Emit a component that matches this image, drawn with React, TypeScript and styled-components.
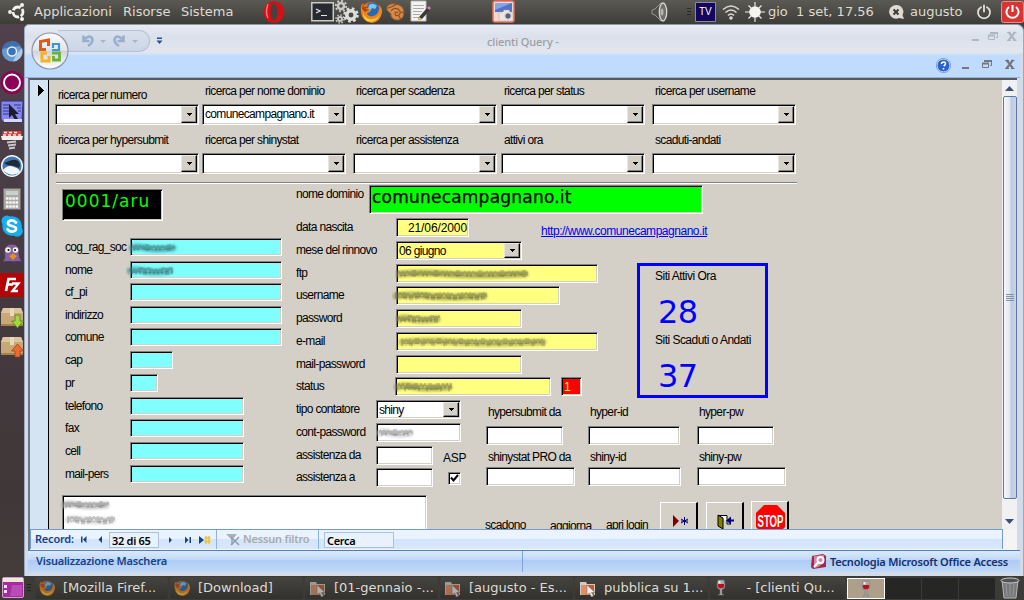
import React from "react";
import styled, { createGlobalStyle, css } from "styled-components";

const Global = createGlobalStyle`
  * { box-sizing: border-box; }
  body { margin: 0; background: #463b43; }
`;

const face = "#d4d0c8";
const formFont = `"Liberation Sans", sans-serif`;

/* ---------- desktop ---------- */
const Desktop = styled.div`
  width: 1024px;
  height: 600px;
  overflow: hidden;
  display: flex;
  flex-direction: column;
  background: #463b43;
`;
const TopPanel = styled.header`
  height: 24px;
  flex: none;
  display: flex;
  align-items: center;
  background: linear-gradient(#5b5953, #3d3c38);
  color: #dfdbd2;
  font: 13px "DejaVu Sans", sans-serif;
  white-space: pre;
`;
const Slot = styled.div<{ $gap?: number; $w: number }>`
  flex: none;
  margin-left: ${(p) => p.$gap ?? 0}px;
  width: ${(p) => p.$w}px;
  height: 24px;
  display: flex;
  align-items: center;
  line-height: 24px;
  padding-bottom: 1px;
`;
const Middle = styled.div`
  height: 552px;
  flex: none;
  display: flex;
`;
const Launcher = styled.nav`
  width: 24px;
  flex: none;
  background: linear-gradient(#51414c, #453940 50%, #403838 85%, #433c3b);
`;
const LaunchItem = styled.div<{ $gap: number; $h: number }>`
  margin-top: ${(p) => p.$gap}px;
  height: ${(p) => p.$h}px;
  svg { display: block; }
`;

/* ---------- window chrome ---------- */
const Win = styled.main`
  width: 1000px;
  flex: none;
  display: flex;
  flex-direction: column;
  background: #d3dbe8;
  border: 1px solid #9aa9bf;
  border-top-color: #8b98ac;
  border-bottom: 0;
  border-radius: 5px 7px 0 0;
  position: relative;
`;
const TitleBar = styled.div`
  height: 28px;
  flex: none;
  display: flex;
  background: linear-gradient(#e7ebf2, #dbe1eb 40%, #e1e6ef);
  border-radius: 5px 7px 0 0;
`;
const QuickBar = styled.div`
  width: 92px;
  height: 22px;
  margin: 5px 0 0 33px;
  display: flex;
  align-items: center;
  padding-left: 22px;
  background: linear-gradient(#d9e1ec, #cbd6e5);
  border: 1px solid #b3c2d8;
  border-left: 0;
  border-radius: 0 11px 11px 0;
`;
const QuickMore = styled.div`
  margin: 12px 0 0 6px;
  width: 8px;
  height: 10px;
  svg { display: block; }
`;
const WinTitle = styled.div`
  width: 90px;
  margin: 4px 0 0 323px;
  font: 500 11px/26px "Noto Sans", sans-serif;
  letter-spacing: -0.1px;
  color: #9d9da1;
  white-space: pre;
`;
const WinButtons = styled.div<{ $gap: number; $right: number; $drop: number }>`
  margin-left: auto;
  padding-right: ${(p) => p.$right}px;
  padding-top: ${(p) => p.$drop}px;
  display: flex;
  align-items: flex-start;
  gap: ${(p) => p.$gap}px;
  svg { display: block; }
`;
const Ribbon = styled.div`
  height: 25px;
  flex: none;
  display: flex;
  margin-right: 3px;
  background: #bfdbff;
  border-top: 2px solid #d3e2f5;
  border-bottom: 1px solid #8fb2e4;
`;
const HelpSlot = styled.div`
  margin: 3px 0 0 auto;
  width: 26px;
  svg { display: block; }
`;
const OfficeButton = styled.div`
  position: absolute;
  left: 6px;
  top: 7px;
  width: 38px;
  height: 38px;
`;
const Body = styled.div`
  margin: 0 4px 0 3px;
  border-left: 2px solid #6f7786;
  border-top: 2px solid #5a5a58;
  height: 472px;
  flex: none;
  display: flex;
  flex-direction: column;
  width: 989px;
  background: #f4f4f4;
`;
const FormArea = styled.div`
  display: flex;
  height: 449px;
  flex: none;
`;
const RecordSelector = styled.div`
  width: 19px;
  flex: none;
  background: #d5e4f3;
  border-right: 1px solid #000;
  padding: 2px 0 0 8px;
`;
const FormSheet = styled.section`
  width: 953px;
  flex: none;
  height: 449px;
  overflow: hidden;
  background: ${face};
  font: 12px/15px ${formFont};
  letter-spacing: -0.66px;
  color: #000;
  white-space: nowrap;
`;
const ScrollBar = styled.div`
  width: 15px;
  flex: none;
  height: 449px;
  display: flex;
  flex-direction: column;
  background: #f1f1f3;
`;
const ArrowCell = styled.div<{ $h: number; $drop?: number }>`
  height: ${(p) => p.$h}px;
  flex: none;
  padding-top: ${(p) => p.$drop ?? 0}px;
  display: flex;
  align-items: center;
  justify-content: center;
`;
const Thumb = styled.div`
  height: 403px;
  flex: none;
  margin: 0 0 0 1px;
  width: 14px;
  border: 1px solid #5d78a8;
  border-radius: 2px;
  background: linear-gradient(90deg, #f5f8fc, #e3e9f1 45%, #bccbe0 60%, #cad6e7);
  display: flex;
  align-items: center;
  justify-content: center;
`;

/* ---------- form parts ---------- */
const sunken = css`
  border: 1px solid;
  border-color: #808080 #fff #fff #808080;
  box-shadow: inset 1px 1px 0 #000, inset -1px -1px 0 ${face};
`;
const Field = styled.div<{ $w: number; $bg?: string; $h?: number; $gap?: number; $color?: string }>`
  ${sunken}
  flex: none;
  width: ${(p) => p.$w}px;
  height: ${(p) => p.$h ?? 19}px;
  margin-left: ${(p) => p.$gap ?? 0}px;
  background: ${(p) => p.$bg ?? "#fff"};
  color: ${(p) => p.$color ?? "#000"};
  padding: 1px 2px 0 3px;
  line-height: 16px;
  overflow: visible;
  svg { display: block; }
`;
const DateField = styled(Field)`
  text-align: right;
  letter-spacing: -0.1px;
  padding-right: 1px;
`;
const StatusCode = styled(Field)`
  padding-left: 2px;
`;
const ComboBox = styled(Field)`
  display: flex;
  justify-content: space-between;
  padding: 1px 1px 1px 2px;
`;
const ComboButton = styled.span`
  width: 16px;
  flex: none;
  height: 100%;
  background: ${face};
  border: 1px solid;
  border-color: #e8e6e0 #000 #000 #e8e6e0;
  box-shadow: inset -1px -1px 0 #808080;
  display: flex;
  align-items: center;
  justify-content: center;
`;
const Caption = styled.div<{ $w?: number; $gap?: number; $drop?: number }>`
  flex: none;
  width: ${(p) => (p.$w ? p.$w + "px" : "auto")};
  margin-left: ${(p) => p.$gap ?? 0}px;
  margin-top: ${(p) => p.$drop ?? 0}px;
  line-height: 17px;
`;
const StatsCaption = styled(Caption)`
  letter-spacing: -0.52px;
`;
const SearchRow = styled.div<{ $top: number }>`
  display: flex;
  padding: ${(p) => p.$top}px 0 0 6px;
`;
const SearchCell = styled.div<{ $w: number; $h?: number; $below?: number }>`
  width: ${(p) => p.$w}px;
  height: ${(p) => p.$h ?? 42}px;
  margin-bottom: ${(p) => p.$below ?? 0}px;
  display: flex;
  flex-direction: column;
  justify-content: space-between;
`;
const Divider = styled.div`
  margin: 8px 0 0 7px;
  width: 741px;
  height: 2px;
  background: #fff;
  border-top: 1px solid #808080;
`;
const Columns = styled.div`
  display: flex;
`;
const Customer = styled.div`
  width: 247px;
  flex: none;
  padding: 5px 0 0 13px;
`;
const CodeBox = styled.div`
  ${sunken}
  width: 101px;
  height: 32px;
  margin-bottom: 17px;
  padding-left: 2px;
  background: #000;
  color: #0f0;
  font: 17px/23px "DejaVu Sans", sans-serif;
  letter-spacing: 1px;
`;
const Row = styled.div<{ $h: number; $pad?: number }>`
  height: ${(p) => p.$h}px;
  padding-left: ${(p) => p.$pad ?? 0}px;
  display: flex;
  align-items: flex-start;
`;
const Main = styled.div`
  flex: 1;
  padding-top: 1px;
`;
const DomainBox = styled.div`
  ${sunken}
  width: 334px;
  height: 29px;
  padding-left: 2px;
  background: #0f0;
  font: 17px/23px "DejaVu Sans", sans-serif;
  letter-spacing: 0.22px;
  -webkit-text-stroke: 0.25px #000;
`;
const Upper = styled.div`
  display: flex;
  height: 182px;
`;
const Site = styled.div`
  width: 341px;
  flex: none;
`;
const Link = styled.a`
  color: #00f;
  text-decoration: underline;
  letter-spacing: -0.47px;
  margin: 6px 0 0 72px;
`;
const Stats = styled.div`
  width: 131px;
  height: 135px;
  margin-top: 45px;
  border: 3px solid #00f;
  padding: 2px 0 0 15px;
`;
const Total = styled.div`
  color: #00f;
  font: 32px/40px "DejaVu Sans", sans-serif;
  height: 47px;
  padding: 7px 0 0 3px;
`;
const Lower = styled.div`
  display: flex;
  height: 95px;
`;
const Counters = styled.div`
  width: 190px;
  flex: none;
`;
const AspBlock = styled.div`
  margin: 4px 0 0 10px;
  display: flex;
  flex-direction: column;
  letter-spacing: -0.3px;
`;
const CheckBox = styled.div`
  ${sunken}
  width: 13px;
  height: 13px;
  margin: 5px 0 0 5px;
  background: #fff;
`;
const Hyper = styled.div`
  padding-top: 4px;
`;
const Footer = styled.div`
  display: flex;
  padding-left: 13px;
  height: 40px;
`;
const ToolButton = styled.div<{ $gap: number; $drop: number }>`
  flex: none;
  width: 38px;
  height: 38px;
  margin: ${(p) => p.$drop}px 0 0 ${(p) => p.$gap}px;
  border: 1px solid;
  border-color: #fff #000 #000 #fff;
  border-right-width: 2px;
  background: ${face};
  padding: 3px 0 0 3px;
  svg { display: block; }
`;

/* ---------- navigation and status bars ---------- */
const NavBar = styled.div`
  width: 973px;
  height: 20px;
  flex: none;
  display: flex;
  align-items: center;
  background: linear-gradient(#eaf3ff 45%, #d3e5fc 50%, #d8e8fd);
  border: 1px solid #6f9bd8;
  border-bottom: 0;
  font: 600 11px/18px "Noto Sans", sans-serif;
  letter-spacing: -0.2px;
  color: #15428b;
  white-space: pre;
`;
const NavBox = styled.div<{ $w: number; $gap: number }>`
  width: ${(p) => p.$w}px;
  height: 16px;
  margin-left: ${(p) => p.$gap}px;
  padding-left: 2px;
  line-height: 15px;
  border: 1px solid #a9c1e2;
  background: #e8f1fc;
  color: #000;
  letter-spacing: -0.3px;
`;
const NavText = styled.div<{ $w: number; $gap: number; $muted?: boolean }>`
  width: ${(p) => p.$w}px;
  margin-left: ${(p) => p.$gap}px;
  margin-top: -1px;
  color: ${(p) => (p.$muted ? "#a9aaab" : "inherit")};
`;
const NavIcon = styled.div<{ $w: number; $gap: number }>`
  width: ${(p) => p.$w}px;
  margin-left: ${(p) => p.$gap}px;
  svg { display: block; }
`;
const NavSep = styled.div<{ $gap: number }>`
  width: 1px;
  height: 100%;
  background: #8db2e3;
  margin-left: ${(p) => p.$gap}px;
`;
const StatusBar = styled.div`
  height: 22px;
  flex: none;
  margin: 0 3px;
  display: flex;
  align-items: center;
  background: linear-gradient(#d9e9fd, #c3daf8 40%, #adcbf3 42%, #c1d9f8);
  border-top: 1px solid #567db0;
  font: 600 11px/20px "Noto Sans", sans-serif;
  letter-spacing: -0.2px;
  color: #15428b;
  padding-left: 8px;
  white-space: pre;
`;
const StatusLeft = styled.div`
  width: 487px;
  height: 21px;
  border-right: 1px solid #7ea3d6;
`;
const StatusRight = styled.div`
  margin-left: 288px;
  display: flex;
  align-items: center;
  gap: 4px;
  color: #12316f;
`;

/* ---------- task bar ---------- */
const TaskBar = styled.footer`
  height: 24px;
  flex: none;
  display: flex;
  align-items: center;
  background: #3c3b37;
  color: #dfdbd2;
  font: 13px/22px "DejaVu Sans", sans-serif;
  white-space: pre;
`;
const Task = styled.div<{ $w?: number; $dim?: boolean }>`
  width: ${(p) => p.$w ?? 133}px;
  height: 22px;
  margin-right: 2px;
  flex: none;
  display: flex;
  align-items: center;
  gap: 8px;
  padding-left: 4px;
  border-radius: 3px;
  background: linear-gradient(#45443f, #32312e);
  svg { opacity: ${(p) => (p.$dim ? 0.65 : 1)}; flex: none; }
`;
const Workspace = styled.div<{ $active?: boolean }>`
  width: ${(p) => (p.$active ? 38 : 37)}px;
  height: 21px;
  flex: none;
  background: ${(p) => (p.$active ? "#ad9f8a" : "#262624")};
  border: ${(p) => (p.$active ? "1px solid #fff" : "0")};
  border-right: ${(p) => (p.$active ? "1px solid #fff" : "1px solid #3c3b37")};
  display: flex;
  align-items: center;
  justify-content: center;
`;

/* ---------- drawings ---------- */
const DownArrow = () => (
  <svg width="5" height="3" shapeRendering="crispEdges"><path d="M0 0h5v1H4v1H3v1H2V2H1V1H0z" /></svg>
);
const Firefox = ({ s = 22 }: { s?: number }) => (
  <svg width={s} height={s} viewBox="0 0 22 22">
    <circle cx="11" cy="11" r="10" fill="#e8721c" />
    <circle cx="12" cy="9" r="7.4" fill="#2a68b0" />
    <path d="M9 4q4-3 8 1l-2 3-3-1-1 2-3-1z" fill="#7cc5ee" />
    <path d="M1 10Q0 4 3 2l1 3 4-1-1 3 4 2-1 2-3 1q1 4 6 3 5-1 6-7 1-3-1-5 5 4 4 9-2 9-10 10Q2 20 1 10z" fill="#ee8420" />
    <path d="M3 12q3 7 10 6 6-1 7-7-1 9-9 10-8 0-8-9z" fill="#ffc532" />
    <path d="M2 8q0-3 1-5l1 3 4-1-2 3 3 1-4 2z" fill="#b94214" />
  </svg>
);
const Folder = () => (
  <svg width="17" height="17" viewBox="0 0 17 17">
    <path d="M1 2h6l1 2h8v11H1z" fill="#cfcac3" />
    <path d="M2 5h13v10H2z" fill="#c7572c" />
    <path d="M2 5h7l3 10H2z" fill="#e58c62" />
    <path d="M8 5v10l2.500-2 2 4 2-1-2-3.500h3.500z" fill="#f1efec" stroke="#777" strokeWidth=".6" />
  </svg>
);
const Wine = () => (
  <svg width="10" height="17" viewBox="0 0 10 17">
    <path d="M2 1h6l1 5q0 4-3 4.500V15l2 1H2l2-1v-4.500Q1 10 1 6z" fill="#a8a8a8" stroke="#777" strokeWidth=".5" />
    <path d="M2 5h6q1 4-3 4.500Q1 9 2 5z" fill="#b8101c" />
    <path d="M2.500 2h2v2.500h-2z" fill="#eee" />
  </svg>
);
const SmudgeArt = styled.svg<{ $dx: number }>`
  margin-left: ${(p) => p.$dx - 8}px;
  .body { filter: blur(1px); }
  .hatch { filter: blur(0.4px); }
`;
const Smudge = ({ w, tone, seed = 1, dx = 0 }: { w: number; tone: string; seed?: number; dx?: number }) => {
  let hatch = "";
  for (let i = 0; i < Math.floor(w / 2); i++) {
    const k = (i * 7 + seed * 5 + i * i) % 11;
    hatch += `M${4 + i * 2} ${4 + (k % 4) * 0.8}v${3 + (k % 5)}`;
  }
  return (
    <SmudgeArt $dx={dx} width={w + 12} height="15">
      <path className="body" d={`M4 8Q${w * 0.2} 6 ${w * 0.4} 8T${w} 8`} stroke={tone} strokeWidth="7" opacity=".6" fill="none" strokeLinecap="round" />
      <path className="hatch" d={hatch} stroke="#222" strokeWidth="1" opacity=".38" fill="none" />
      <path className="hatch" d={`M6 9.500Q${w * 0.3} 8 ${w * 0.5} 9.500T${w - 2} 8.500`} stroke="#222" strokeWidth="1" opacity=".18" fill="none" />
    </SmudgeArt>
  );
};
const Power = ({ c }: { c: string }) => (
  <svg width="16" height="16" viewBox="0 0 16 16" fill="none" stroke={c} strokeWidth="1.900" strokeLinecap="round">
    <path d="M5 3.200a6 6 0 1 0 6 0M8 1.500v6" />
  </svg>
);
const WinIcons = ({ c }: { c: string }) => (
  <>
    <svg width="7" height="11"><path d="M0 8h7v2H0z" fill={c} /></svg>
    <svg width="10" height="11"><path d="M2.500 1.500h7v5H8M.5 4.500h6v4h-6z" fill="none" stroke={c} /><path d="M2 1h8v2H2zM0 3.500h7v2H0z" fill={c} /></svg>
    <svg width="10" height="11"><path d="M1.500 1l6.500 8.500M8 1L1.500 9.500" stroke={c} strokeWidth="2.100" /><path d="M0 1.500h4M6 1.500h3.500M0 9.500h4M6 9.500h3.500" stroke={c} /></svg>
  </>
);

const Combo = ({ w, text, h = 21, bg, gap }: { w: number; text?: string; h?: number; bg?: string; gap?: number }) => (
  <ComboBox $w={w} $h={h} $bg={bg} $gap={gap}>
    <span>{text}</span>
    <ComboButton><DownArrow /></ComboButton>
  </ComboBox>
);

const searchTop = [
  ["ricerca per numero", 147, ""],
  ["ricerca per nome dominio", 151, "comunecampagnano.it"],
  ["ricerca per scadenza", 148, ""],
  ["ricerca per status", 151, ""],
  ["ricerca per username", 144, ""],
] as const;
const searchBottom = [
  ["ricerca per hypersubmit", 147],
  ["ricerca per shinystat", 151],
  ["ricerca per assistenza", 148],
  ["attivi ora", 151],
  ["scaduti-andati", 144],
] as const;
const customerRows: [string, number, number, number][] = [
  ["cog_rag_soc", 152, 23, 1],
  ["nome", 152, 22, 2],
  ["cf_pi", 152, 23, 0],
  ["indirizzo", 152, 22, 0],
  ["comune", 152, 23, 0],
  ["cap", 43, 23, 0],
  ["pr", 28, 23, 0],
  ["telefono", 114, 22, 0],
  ["fax", 114, 23, 0],
  ["cell", 114, 23, 0],
  ["mail-pers", 114, 23, 0],
];
const yellow = "#ffff80";

const LaunchIcons = () => (
  <Launcher>
    <LaunchItem $gap={17} $h={21}>
      <svg width="24" height="21"><circle cx="12" cy="10.500" r="10" fill="#6a9bd0" /><path d="M2 8a10.500 10.500 0 0 1 19-3l-9 1z" fill="#3f6fae" /><path d="M22 7a10 10 0 0 1-9 13.500l4-8z" fill="#a9cbea" /><circle cx="12" cy="10.500" r="4.500" fill="#3a73b9" stroke="#e4eef8" strokeWidth="1.500" /></svg>
    </LaunchItem>
    <LaunchItem $gap={9} $h={23}>
      <svg width="24" height="23"><circle cx="12" cy="11.500" r="11.500" fill="#8c0057" /><circle cx="12" cy="11.500" r="8" fill="none" stroke="#fff" strokeWidth="2" /></svg>
    </LaunchItem>
    <LaunchItem $gap={6} $h={23}>
      <svg width="24" height="23"><path d="M1 1h22v2l-1 16 1 3H3l-2-3z" fill="#8588f0" stroke="#33336e" /><path d="M3 5h7M3 8h7M3 11h7M3 14h9M14 5h7M17 8h4M18 11h3" stroke="#34347c" /><path d="M9 4v14l3-3 3 5 3-1-3-5h4z" fill="#1c1c28" /><path d="M4 19h18v3H4z" fill="#d8d8f8" /></svg>
    </LaunchItem>
    <LaunchItem $gap={7} $h={20}>
      <svg width="24" height="20"><path d="M3 1h18l1 6H2z" fill="#d9453a" /><path d="M1 6h22l-1 4H2z" fill="#f3efee" /><path d="M4 2.500h3M9 2.500h3M14 2.500h3M3 5h3M8 5h3M13 5h3M18 5h3" stroke="#f6e9e6" strokeWidth="1.500" /><path d="M7 12.500l9-1M8 15.500l8-1M9 18.500l6-1" stroke="#c9c9c9" strokeWidth="2.200" /></svg>
    </LaunchItem>
    <LaunchItem $gap={5} $h={22}>
      <svg width="24" height="22"><circle cx="12" cy="11" r="10.300" fill="#3d79b6" stroke="#eef3f7" strokeWidth="1.500" /><path d="M3 15q5-6 11-3 5 1 6 5-8 6-16-1z" fill="#f4f6f8" /><path d="M4 8l8-3q7-1 8 5l-1 3-5-2-7-1z" fill="#222a33" /></svg>
    </LaunchItem>
    <LaunchItem $gap={11} $h={23}>
      <svg width="24" height="23"><path d="M3.500.500h17v21h-17z" fill="#a8a8a4" stroke="#6d6d69" /><path d="M6 3h12v4H6z" fill="#c9d2c9" /><path d="M6 10.500h12M6 14.500h12M6 18.500h12" stroke="#f4f4f2" strokeWidth="2.500" strokeDasharray="2.500 .7" /></svg>
    </LaunchItem>
    <LaunchItem $gap={4} $h={22}>
      <svg width="24" height="22"><circle cx="12" cy="11" r="9.800" fill="#17aef0" /><circle cx="7" cy="6" r="5.500" fill="#17aef0" /><circle cx="17" cy="16" r="5.800" fill="#17aef0" /><path d="M16 7.500Q14 5.200 11.500 5.400 8 5.700 8 8.200q0 2 4 2.800 4.300.8 4 3-.2 2.500-4 2.600-3 0-4.500-2.300" fill="none" stroke="#fff" strokeWidth="2.800" strokeLinecap="round" /></svg>
    </LaunchItem>
    <LaunchItem $gap={5} $h={21}>
      <svg width="24" height="21"><path d="M2 20q4-3 2-11 2-8 9-7 7 1 6 9 0 5 3 9-6-1-8 0-6-1-12 0z" fill="#80649c" stroke="#4b3563" /><circle cx="8" cy="8" r="2.800" fill="#f6f1e6" /><circle cx="15.500" cy="8" r="2.800" fill="#f6f1e6" /><circle cx="8.500" cy="8" r="1" /><circle cx="15" cy="8" r="1" /><path d="M9 14l4-2.500 4 2.500-4 4z" fill="#f08b1d" /></svg>
    </LaunchItem>
    <LaunchItem $gap={10} $h={24}>
      <svg width="24" height="24"><path d="M0 0h24v24H0z" fill="#b30505" /><path d="M6 18L8.500 6H16M7 11.500h6" stroke="#fff" strokeWidth="2.600" fill="none" /><path d="M12 10.500h6.500l-6 7.500H18" stroke="#fff" strokeWidth="2.300" fill="none" /></svg>
    </LaunchItem>
    {["M15 8h5v6h3.500L17.500 21 11.500 14H15z", "M15 21h5v-6h3.500L17.500 8 11.500 15H15z"].map((d, i) => (
      <LaunchItem key={d} $gap={10 - i} $h={20 + i}>
        <svg width="24" height="22" overflow="visible"><path d="M3 1h18l2 5v13H1V6z" fill="#c9a878" /><path d="M3 1h18l2 5H1z" fill="#dcc49c" /><path d="M10 1h4v8h-4z" fill="#ead9b8" /><path d="M1 17h22v2H1z" fill="#a5834f" /><path d={d} fill={i ? "#ee6c2f" : "#a3d63a"} stroke={i ? "#a3401a" : "#54801a"} strokeWidth=".8" /></svg>
      </LaunchItem>
    ))}
  </Launcher>
);

const Panel = () => (
  <TopPanel>
    <Slot $gap={8} $w={18}>
      <svg width="18" height="18" viewBox="0 0 18 18"><circle cx="10" cy="9" r="5" fill="none" stroke="#f4f2ec" strokeWidth="2.800" strokeDasharray="8.800 1.700" strokeDashoffset="4" /><circle cx="2" cy="9" r="1.900" fill="#f4f2ec" /><circle cx="14" cy="2" r="2" fill="#f4f2ec" /><circle cx="14" cy="16" r="2" fill="#f4f2ec" /></svg>
    </Slot>
    <Slot $gap={8} $w={89}>Applicazioni</Slot>
    <Slot $w={58}>Risorse</Slot>
    <Slot $w={60}>Sistema</Slot>
    <Slot $gap={22} $w={22}>
      <svg width="22" height="22"><ellipse cx="11" cy="11" rx="10.500" ry="10.800" fill="#cf1216" /><ellipse cx="11" cy="11" rx="3.300" ry="8.500" fill="#45433f" /><path d="M5 3q-3 8 0 14" stroke="#f4777a" strokeWidth="1.500" fill="none" /></svg>
    </Slot>
    <Slot $gap={26} $w={24}>
      <svg width="24" height="20"><path d="M.8.800h21.500v18H.8z" fill="#272b31" stroke="#c9cac6" strokeWidth="1.500" /><path d="M5 7l4 2-4 2M10 13.500h6" stroke="#e8e8e8" fill="none" strokeWidth="1.200" /></svg>
    </Slot>
    <Slot $w={24}>
      <svg width="24" height="24"><g fill="none" stroke="#c9c9c7"><circle cx="6" cy="6" r="3" strokeWidth="2.500" /><circle cx="6" cy="6" r="5.200" strokeWidth="2" strokeDasharray="2 2" /><circle cx="5" cy="19" r="2" strokeWidth="2" /><circle cx="5" cy="19" r="4" strokeWidth="1.500" strokeDasharray="1.600 1.500" /><circle cx="16" cy="15" r="4.200" strokeWidth="3.500" stroke="#dcdcda" /><circle cx="16" cy="15" r="6.500" strokeWidth="2.500" strokeDasharray="2.600 2.500" stroke="#dcdcda" /></g></svg>
    </Slot>
    <Slot $gap={1} $w={22}><Firefox /></Slot>
    <Slot $gap={4} $w={20}>
      <svg width="20" height="20"><path d="M1 5q2-4 8-3 9 1 9 9-1 8-8 7-6-2-5-6l-4-4z" fill="#d58a4d" stroke="#9c5a24" /><path d="M5 9q3-4 7-2 4 3 1 6-4 2-4-2 2-2 3 0M2 6q4-1 9-4M13 14l2 4M15 10l3 1" fill="none" stroke="#8f4e1c" strokeWidth="1.200" /></svg>
    </Slot>
    <Slot $gap={4} $w={21}>
      <svg width="21" height="23"><path d="M1 1h15v20H1z" fill="#f3f3f1" stroke="#bbb" /><path d="M3 5.500h11M3 8.500h11M3 11.500h9M3 14.500h7M3 17.500h6" stroke="#aaa" /><path d="M9 17l8-9 3 2-8 9-4 1z" fill="#3a3a3a" /><path d="M17 8l2-2 2 2-1.500 2z" fill="#d279b8" /><path d="M8 20l1-3 3 2z" fill="#e6d54a" /></svg>
    </Slot>
    <Slot $gap={61} $w={24}>
      <svg width="23" height="23"><rect x="1" y="1" width="21" height="21" rx="2" fill="#f4d6cf" stroke="#e2705b" strokeWidth="1.500" /><path d="M3 3h17v9H3z" fill="#4f74c8" /><path d="M3 3h17l-17 7z" fill="#84a5e6" /><path d="M7 12h4l1-2h5l1 2h3v9H7z" fill="#f0e2dc" stroke="#b8a39c" strokeWidth=".5" /><circle cx="16" cy="16" r="3.200" fill="#53617c" stroke="#ddd" /></svg>
    </Slot>
    <Slot $gap={135} $w={18}>
      <svg width="18" height="22"><path d="M1 9l3-1 6-6 2 1v16l-2 1-6-6-3-1z" fill="#4f4e4a" stroke="#96948e" /><ellipse cx="12" cy="11" rx="3.700" ry="9" fill="#6f6e6a" stroke="#d8d6d0" strokeWidth="1.300" /><ellipse cx="11" cy="11" rx="1.500" ry="3.500" fill="#b5b3ad" /></svg>
    </Slot>
    <Slot $gap={18} $w={6}><svg width="5" height="10"><path d="M0 1.500h4M0 4.500h4M0 7.500h4" stroke="#2a2926" /></svg></Slot>
    <Slot $gap={2} $w={23}>
      <svg width="21" height="20"><path d="M.5.500h20v19H.5z" fill="#14065c" stroke="#8b8aa0" /><text x="4" y="13" fontSize="10" fontFamily="Liberation Sans" fill="#fff">TV</text></svg>
    </Slot>
    <Slot $gap={4} $w={19}>
      <svg width="18" height="18" fill="none" stroke="#dfdbd2" strokeWidth="1.600"><path d="M1 6.500q8-7 16 0M3.500 9.500q5.500-5 11 0M6 12.500q3-3 6 0" /><circle cx="9" cy="15" r="1" fill="#dfdbd2" /></svg>
    </Slot>
    <Slot $gap={4} $w={20}>
      <svg width="20" height="20"><circle cx="10" cy="10" r="5.800" fill="#f5f4f0" /><path d="M10 0v20M0 10h20M3.500 3.500l13 13M16.500 3.500l-13 13" stroke="#f5f4f0" strokeWidth="1.100" /></svg>
    </Slot>
    <Slot $gap={3} $w={120}>gio  1 set, 17.56</Slot>
    <Slot $w={17}>
      <svg width="17" height="16"><path d="M8 1a7 6.800 0 1 0 3 13l5 1-1.500-4A7 6.800 0 0 0 8 1z" fill="#dfdbd2" /><path d="M5.500 5.500l5 5M10.500 5.500l-5 5" stroke="#3c3b37" strokeWidth="2" /></svg>
    </Slot>
    <Slot $gap={5} $w={66}>augusto</Slot>
    <Slot $w={16}><Power c="#dfdbd2" /></Slot>
    <Slot $gap={9} $w={23}>
      <svg width="23" height="22"><rect x=".5" y=".5" width="22" height="21" rx="2" fill="#d83434" stroke="#f08a84" /><path d="M8 6a6 6 0 1 0 7 0M11.500 4v7" fill="none" stroke="#fff" strokeWidth="2" /></svg>
    </Slot>
  </TopPanel>
);

const hyperGroups: [string, number, number][][] = [
  [["hypersubmit da", 102, 77], ["hyper-id", 109, 92], ["hyper-pw", 90, 77]],
  [["shinystat PRO da", 102, 89], ["shiny-id", 109, 93], ["shiny-pw", 90, 89]],
];

export default function App() {
  return (
    <Desktop>
      <Global />
      <Panel />
      <Middle>
        <LaunchIcons />
        <Win>
          <TitleBar>
            <QuickBar>
              <svg width="62" height="14"><path d="M5 5Q10 0 12.500 5q.5 4-4.500 7M3.500 1.500v5.500h6" fill="none" stroke="#98aece" strokeWidth="2.600" /><path d="M20 6h6l-3 3zM52 6h6l-3 3z" fill="#a9b5c8" /><path d="M42 5Q37 0 34.500 5q-.5 4 4.500 7M43.500 1.500v5.500h-6" fill="none" stroke="#98aece" strokeWidth="2.600" /></svg>
            </QuickBar>
            <QuickMore><svg width="7" height="8"><path d="M1 .5h5v1.500H1zM.5 3.500h6L3.500 7z" fill="#26509a" /></svg></QuickMore>
            <WinTitle>clienti Query -</WinTitle>
            <WinButtons $gap={9} $right={6} $drop={6}><WinIcons c="#afb7c4" /></WinButtons>
          </TitleBar>
          <Ribbon>
            <HelpSlot>
              <svg width="15" height="15"><circle cx="7.500" cy="7.500" r="6.500" fill="#2a62cf" stroke="#eaf2ff" /><circle cx="7.500" cy="7.500" r="7" fill="none" stroke="#4a76b8" strokeWidth=".7" /><path d="M5.500 6q0-2 2-2t2 1.700q0 1-1.800 2.500M7.500 10v1.500" stroke="#fff" strokeWidth="1.500" fill="none" /></svg>
            </HelpSlot>
            <div>
              <WinButtons $gap={13} $right={5} $drop={4}><WinIcons c="#75777a" /></WinButtons>
            </div>
          </Ribbon>
          <OfficeButton>
            <svg width="38" height="38"><defs><linearGradient id="orb" x2="0" y2="1"><stop stopColor="#fdfdfd" /><stop offset=".48" stopColor="#e2e4e8" /><stop offset=".5" stopColor="#cfd3da" /><stop offset="1" stopColor="#fff" /></linearGradient></defs><circle cx="19" cy="19" r="18" fill="url(#orb)" stroke="#8c97a8" strokeWidth="1.200" /><g fill="none" strokeWidth="3"><path d="M15 17.500H9.500V9.500l8-1.500v6" stroke="#df5a18" /><path d="M21 18h7v-6h-6v4" stroke="#3c97d8" strokeWidth="2.200" /><path d="M16 21h-5v8h7v-5" stroke="#f3b51c" /><path d="M21 21h7.500v7h-6v-4" stroke="#6bb13c" strokeWidth="2.800" /></g></svg>
          </OfficeButton>
          <Body>
            <FormArea>
              <RecordSelector><svg width="7" height="11" shapeRendering="crispEdges"><path d="M0 0l6 5.500L0 11z" /></svg></RecordSelector>
              <FormSheet>
                <SearchRow $top={3}>
                  {searchTop.map(([t, w, v], i) => (
                    <SearchCell key={t} $w={w}>
                      <Caption $gap={3} $drop={i ? 0 : 4}>{t}</Caption>
                      <Combo w={144} text={v} />
                    </SearchCell>
                  ))}
                </SearchRow>
                <SearchRow $top={7}>
                  {searchBottom.map(([t, w]) => (
                    <SearchCell key={t} $w={w}>
                      <Caption $gap={3}>{t}</Caption>
                      <Combo w={144} />
                    </SearchCell>
                  ))}
                </SearchRow>
                <Divider />
                <Columns>
                  <Customer>
                    <CodeBox>0001/aru</CodeBox>
                    {customerRows.map(([t, w, h, s]) => (
                      <Row key={t} $h={h} $pad={3}>
                        <Caption $w={65} $drop={1}>{t}</Caption>
                        <Field $w={w} $bg="#80ffff" $h={18}>{s ? <Smudge w={s === 1 ? 45 : 44} tone="#3d9096" seed={s} dx={s === 1 ? 2 : 0} /> : null}</Field>
                      </Row>
                    ))}
                  </Customer>
                  <Main>
                    <Row $h={33}>
                      <Caption $w={73} $drop={1}>nome dominio</Caption>
                      <DomainBox>comunecampagnano.it</DomainBox>
                    </Row>
                    <Upper>
                      <Site>
                        <Row $h={23}><Caption $w={100} $drop={1}>data nascita</Caption><DateField $w={73} $bg={yellow}>21/06/2000</DateField><Link>http://www.comunecampagnano.it</Link></Row>
                        <Row $h={23}><Caption $w={100} $drop={1}>mese del rinnovo</Caption><Combo w={126} h={19} bg={yellow} text="06 giugno" /></Row>
                        <Row $h={22}><Caption $w={100} $drop={1}>ftp</Caption><Field $w={202} $bg={yellow}><Smudge w={130} tone="#8b8b4c" dx={3} /></Field></Row>
                        <Row $h={23}><Caption $w={100} $drop={1}>username</Caption><Field $w={164} $bg={yellow}><Smudge w={92} tone="#8b8b4c" seed={3} /></Field></Row>
                        <Row $h={23}><Caption $w={100} $drop={1}>password</Caption><Field $w={126} $bg={yellow}><Smudge w={42} tone="#8b8b4c" seed={2} dx={3} /></Field></Row>
                        <Row $h={23}><Caption $w={100} $drop={1}>e-mail</Caption><Field $w={202} $bg={yellow}><Smudge w={145} tone="#9c9c58" seed={4} dx={6} /></Field></Row>
                        <Row $h={22}><Caption $w={100} $drop={1}>mail-password</Caption><Field $w={126} $bg={yellow} /></Row>
                        <Row $h={23}><Caption $w={99} $drop={1}>status</Caption><Field $w={156} $bg={yellow}><Smudge w={56} tone="#8b8b4c" seed={5} dx={2} /></Field><StatusCode $w={21} $gap={10} $bg="#f00" $color="#ff0">1</StatusCode></Row>
                      </Site>
                      <Stats>
                        <StatsCaption>Siti Attivi Ora</StatsCaption>
                        <Total>28</Total>
                        <StatsCaption>Siti Scaduti o Andati</StatsCaption>
                        <Total>37</Total>
                      </Stats>
                    </Upper>
                    <Lower>
                      <Counters>
                        <Row $h={23}><Caption $w={80} $drop={1}>tipo contatore</Caption><Combo w={85} h={19} text="shiny" /></Row>
                        <Row $h={23}><Caption $w={80} $drop={1}>cont-password</Caption><Field $w={85}><Smudge w={34} tone="#bbb" dx={4} /></Field></Row>
                        <Columns>
                          <div>
                            <Row $h={22}><Caption $w={80} $drop={1}>assistenza da</Caption><Field $w={57} /></Row>
                            <Row $h={22}><Caption $w={80} $drop={1}>assistenza a</Caption><Field $w={57} /></Row>
                          </div>
                          <AspBlock>
                            <Caption>ASP</Caption>
                            <CheckBox><svg width="11" height="11"><path d="M2 4.500l2.500 3L9 2" fill="none" stroke="#000" strokeWidth="2" /></svg></CheckBox>
                          </AspBlock>
                        </Columns>
                      </Counters>
                      <Hyper>
                        {hyperGroups.map((g, i) => (
                          <Columns key={i}>
                            {g.map(([t, w, fw]) => (
                              <SearchCell key={t} $w={w} $h={i ? 38 : 41} $below={i ? 0 : 3}>
                                <Caption $gap={2} $drop={i}>{t}</Caption>
                                <Field $w={fw} />
                              </SearchCell>
                            ))}
                          </Columns>
                        ))}
                      </Hyper>
                    </Lower>
                  </Main>
                </Columns>
                <Footer>
                  <Field $w={365} $h={50}><Smudge w={46} tone="#aaa" dx={2} /><Smudge w={48} tone="#ccc" seed={3} dx={6} /></Field>
                  <Caption $gap={58} $w={65} $drop={22}>scadono</Caption>
                  <Caption $w={56} $drop={23}>aggiorna</Caption>
                  <Caption $w={43} $drop={22}>apri login</Caption>
                  <ToolButton $gap={11} $drop={7}>
                    <svg width="32" height="32"><path d="M9 9l6 6-6 6z" fill="#800000" /><path d="M20.500 11v8M17 13l7 4M24 13l-7 4M17 15h7" stroke="#000080" /></svg>
                  </ToolButton>
                  <ToolButton $gap={8} $drop={7}>
                    <svg width="32" height="32"><path d="M8 9.500h9V18h4" fill="#fff" stroke="#000" /><path d="M8 9l5 3v11l-5-3z" fill="#808000" stroke="#000" /><path d="M16 14.500l5-4v3h3v2h-3v3z" fill="#000080" /></svg>
                  </ToolButton>
                  <ToolButton $gap={7} $drop={6}>
                    <svg width="31" height="31"><path d="M9 0h13l8 8v14l-8 8H9l-8-8V8z" fill="#f00" /><text x="2.500" y="21.500" textLength="26" lengthAdjust="spacingAndGlyphs" fontSize="17" fontWeight="bold" fontFamily="Liberation Sans" letterSpacing="0" fill="#fff">STOP</text></svg>
                  </ToolButton>
                </Footer>
              </FormSheet>
              <ScrollBar>
                <ArrowCell $h={16}><svg width="9" height="5"><path d="M0 5l4.500-5L9 5z" fill="#3d4f78" /></svg></ArrowCell>
                <Thumb><svg width="8" height="8"><path d="M0 .5h8M0 2.500h8M0 4.500h8M0 6.500h8" stroke="#8391a8" /></svg></Thumb>
                <ArrowCell $h={30} $drop={14}><svg width="9" height="5"><path d="M0 0l4.500 5L9 0z" fill="#3d4f78" /></svg></ArrowCell>
              </ScrollBar>
            </FormArea>
            <NavBar>
              <NavText $gap={4} $w={44}>Record:</NavText>
              <NavIcon $gap={2} $w={28}><svg width="24" height="7"><path d="M0 .5h1.500v6H0zM5.500 0v7L2 3.500zM21 0v7l-3.500-3.500z" fill="#15428b" /></svg></NavIcon>
              <NavBox $gap={0} $w={50}>32 di 65</NavBox>
              <NavIcon $gap={10} $w={45}><svg width="45" height="8"><path d="M0 1l3 3-3 3zM16 .5l3.500 3.500L16 7.500zM20.500 1H22v6h-1.500zM30 0l5 4-5 4z" fill="#15428b" /><path d="M35.500 2h6M35.500 5.500h6M37 0v8M40 0v8" stroke="#f1c232" strokeWidth="1.500" /></svg></NavIcon>
              <NavSep $gap={2} />
              <NavIcon $gap={9} $w={14}><svg width="14" height="13"><path d="M0 1h11L7 6v6L5 10V6z" fill="#a7b0bd" /><path d="M5 4l8 8M13 4l-8 8" stroke="#8f9aab" strokeWidth="1.500" /></svg></NavIcon>
              <NavText $gap={3} $w={66} $muted>Nessun filtro</NavText>
              <NavSep $gap={9} />
              <NavBox $gap={5} $w={70}>Cerca</NavBox>
            </NavBar>
          </Body>
          <StatusBar>
            <StatusLeft>Visualizzazione Maschera</StatusLeft>
            <StatusRight>
              <svg width="15" height="15"><path d="M1 2l11-2 3 2v11l-13 2-2-2z" fill="#a3284f" /><path d="M3 2l10-1v8l-6 4-4 1z" fill="#d985a0" /><circle cx="9.500" cy="6" r="3" fill="none" stroke="#fff" strokeWidth="2" /><path d="M7.500 8L3 13" stroke="#fff" strokeWidth="2.200" /></svg>
              Tecnologia Microsoft Office Access
            </StatusRight>
          </StatusBar>
        </Win>
      </Middle>
      <TaskBar>
        <Slot $gap={2} $w={33}>
          <svg width="33" height="21"><rect x=".5" y=".5" width="21" height="20" rx="1.500" fill="#a72aa4" stroke="#d79ad4" /><path d="M1 1h20v4H1z" fill="#eee8d6" /><path d="M10 8h10v11H8z" fill="#c564c2" opacity=".6" /><path d="M2 8h3v3H2zM2 13h3v3H2z" fill="#f3dff2" /><path d="M25 7.500h4M25 10.500h4M25 13.500h4" stroke="#23221f" /></svg>
        </Slot>
        <Task $dim><Firefox s={16} />[Mozilla Firef...</Task>
        <Task $dim><Firefox s={16} />[Download]</Task>
        <Task $dim><Folder />[01-gennaio -...</Task>
        <Task $dim><Folder />[augusto - Es...</Task>
        <Task><Folder />pubblica su 1...</Task>
        <Task $w={135}><Slot $gap={2} $w={10}><Wine /></Slot>   - [clienti Qu...</Task>
        <Workspace $active><Wine /></Workspace>
        <Workspace /><Workspace /><Workspace />
        <Slot $gap={4} $w={20}>
          <svg width="20" height="22"><path d="M2 3h16l-2 18H4z" fill="#77787a" stroke="#b5b6b6" /><ellipse cx="10" cy="3.500" rx="9" ry="2.500" fill="#515254" stroke="#c9caca" /><path d="M6 7l1 12M10 7v12M14 7l-1 12" stroke="#989a9a" /></svg>
        </Slot>
      </TaskBar>
    </Desktop>
  );
}
